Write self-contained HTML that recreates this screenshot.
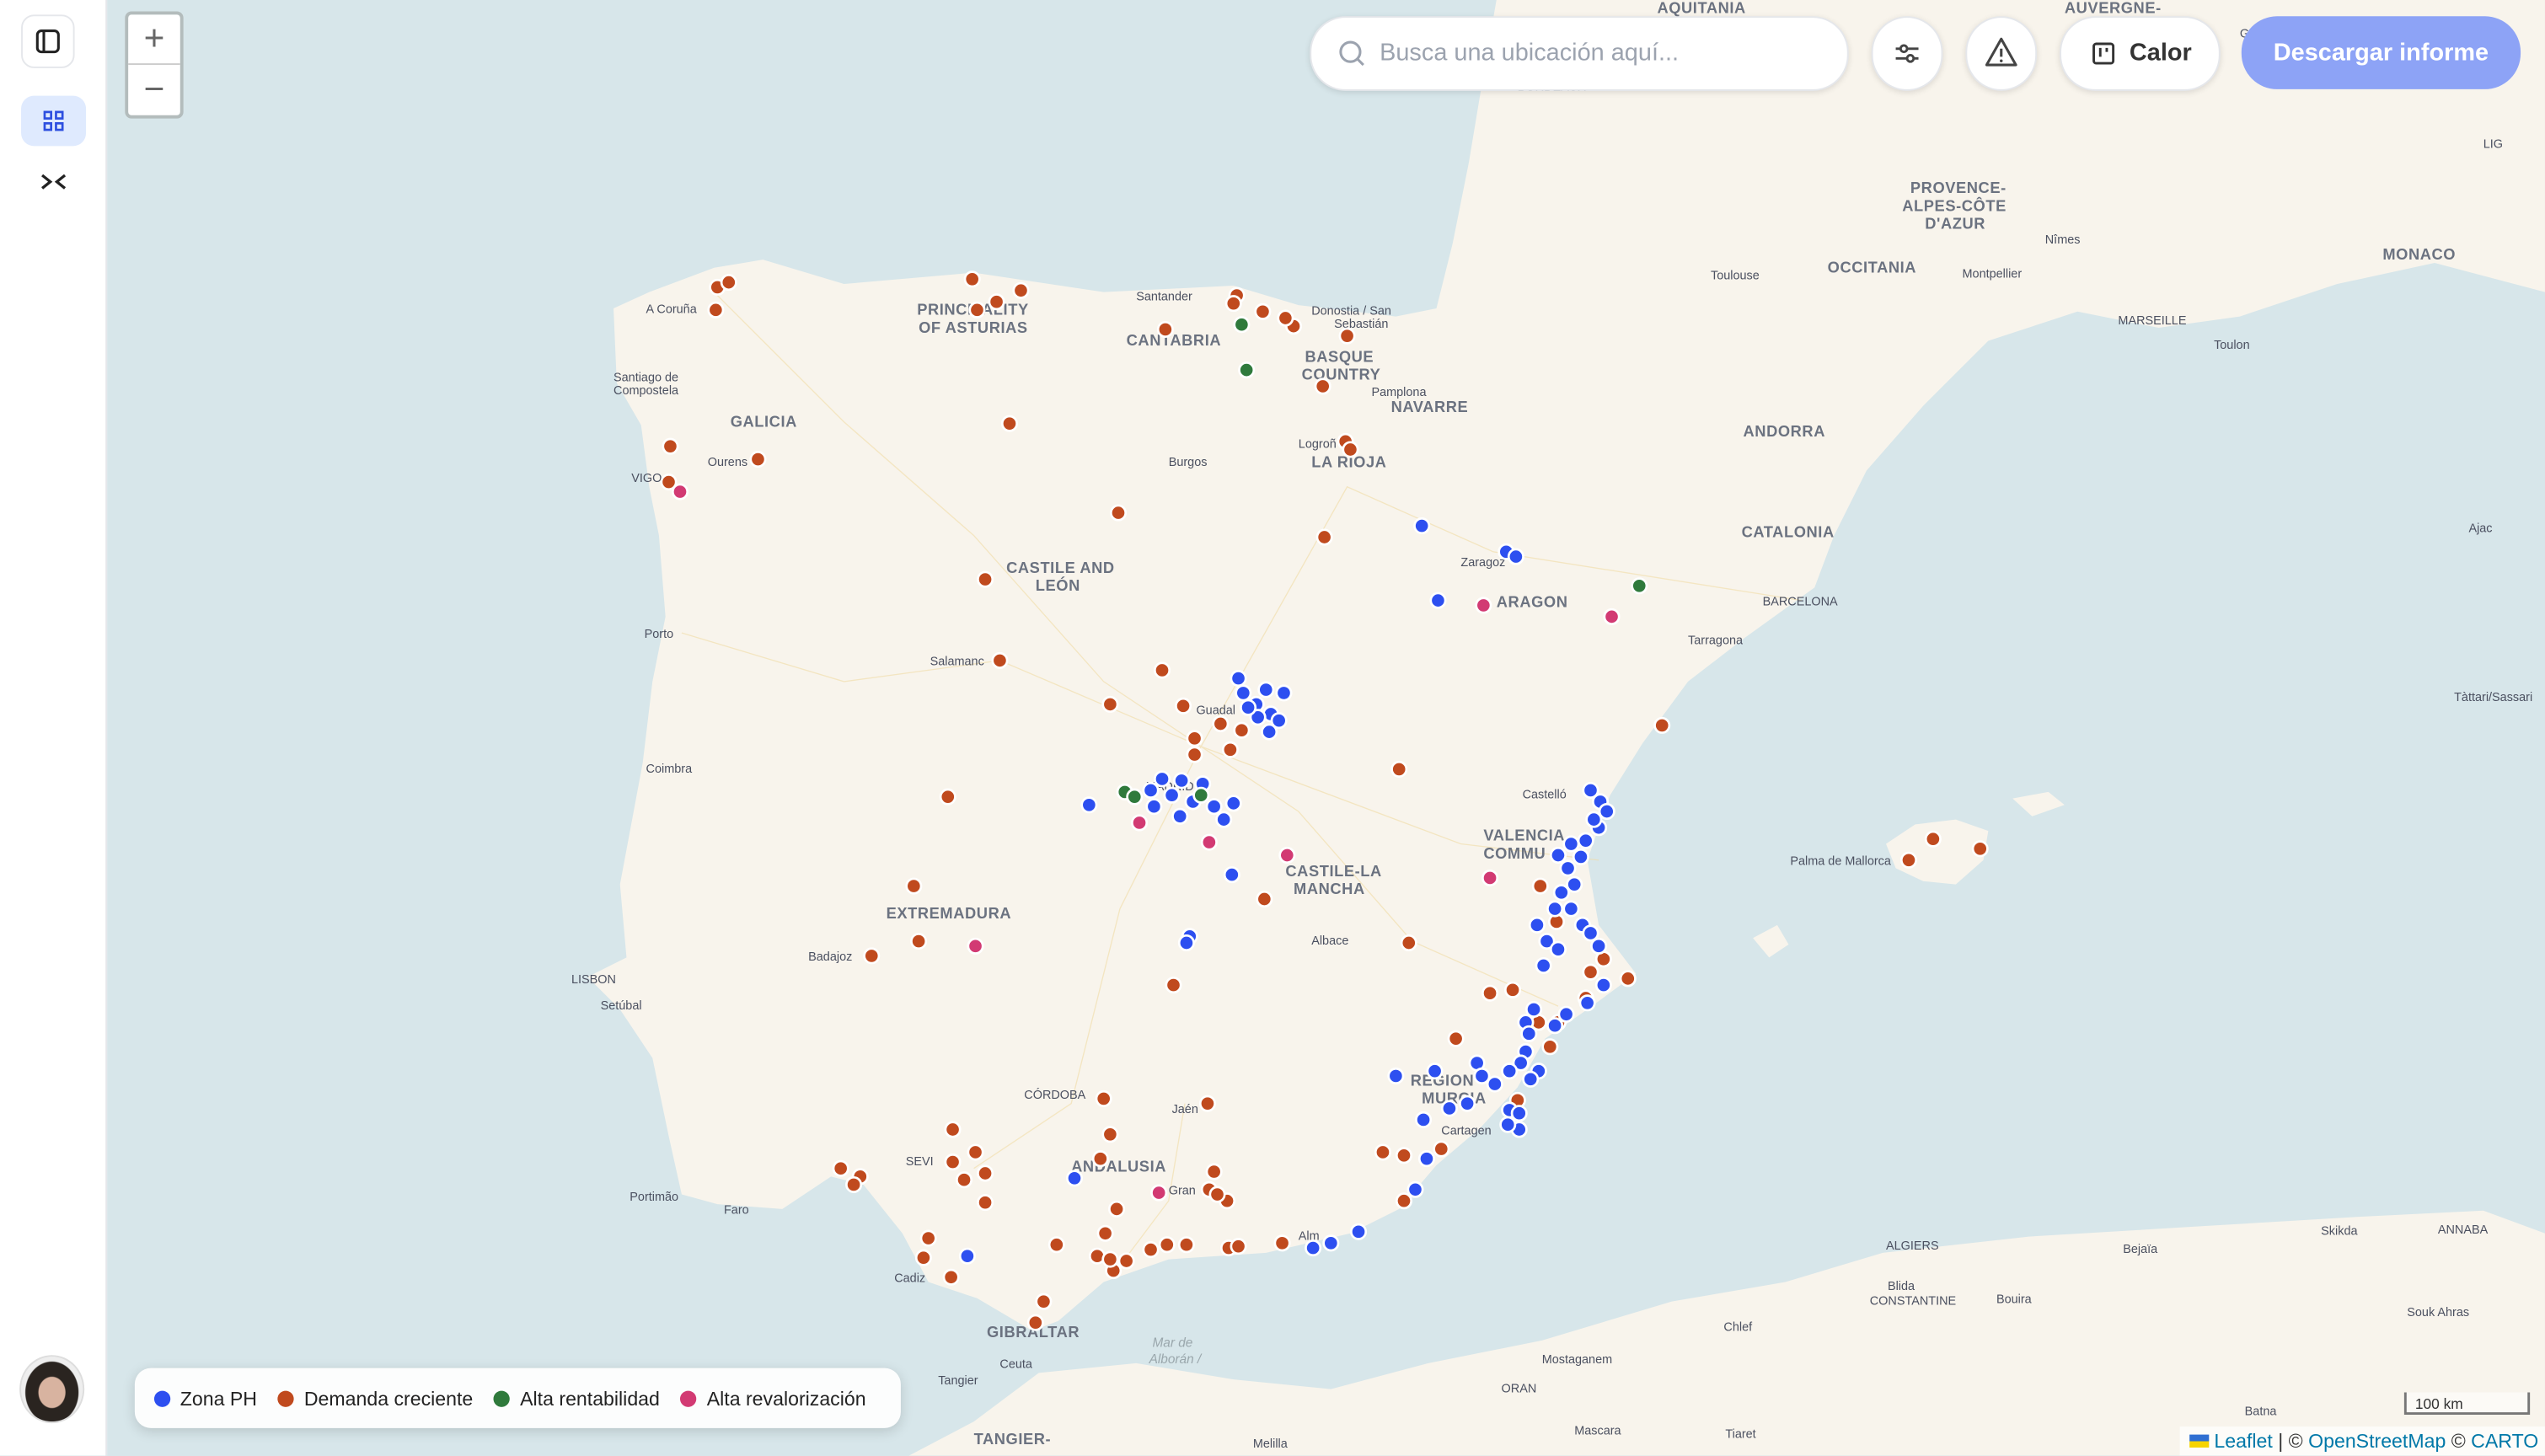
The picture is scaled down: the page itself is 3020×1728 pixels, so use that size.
<!DOCTYPE html>
<html><head><meta charset="utf-8">
<style>
html,body{margin:0;padding:0;width:3020px;height:1728px;overflow:hidden;background:#d7e6ea;font-family:"Liberation Sans",sans-serif}
#w{position:absolute;left:0;top:0;width:1568px;height:897px;transform:scale(1.9260);transform-origin:0 0;overflow:hidden}
#side{position:absolute;left:0;top:0;width:65px;height:897px;background:#fff;border-right:1px solid #e5e7eb}
.sb{position:absolute;left:13px;width:31px;height:31px;border:1px solid #e5e7eb;border-radius:8px;top:9px;background:#fff}
.grid{position:absolute;left:13px;top:59px;width:40px;height:31px;border-radius:8px;background:#dfeafe}
svg text{font-family:"Liberation Sans",sans-serif}
.z{position:absolute;left:77px;top:7px;width:32px;height:62px;border:2px solid #b3bcbc;border-radius:4px;background:#fff}
.pill{position:absolute;top:10px;height:44px;background:#fff;border:1px solid #e5e7eb;border-radius:22px;box-shadow:0 1px 4px rgba(0,0,0,.12)}
.lg{position:absolute;left:83px;top:843px;width:472px;height:37px;background:#fcfdfd;border-radius:10px;box-shadow:0 2px 8px rgba(0,0,0,.15);font-size:12px;color:#222;display:flex;align-items:center;padding-left:12px;box-sizing:border-box;white-space:nowrap}
.lg span.d{display:inline-block;width:10px;height:10px;border-radius:50%;margin-right:6px;flex:none}
.lg span.t{margin-right:13px;flex:none}
.o{fill:#c04a1e;stroke:#fff;stroke-width:1.4}
.b{fill:#2d4ff0;stroke:#fff;stroke-width:1.4}
.g{fill:#2f7a3c;stroke:#fff;stroke-width:1.4}
.p{fill:#d23a73;stroke:#fff;stroke-width:1.4}
.lab{fill:#6b7280;font-size:9.5px;font-weight:bold;letter-spacing:.3px}
.c{fill:#4b5060;font-size:7.5px}
</style></head><body><div id="w">
<svg width="1568" height="897" style="position:absolute;left:0;top:0">
<rect width="1568" height="897" fill="#d7e6ea"/>
<path fill="#f8f4ec" d="M378,190 L400,180 L440,165 L470,160 L520,175 L600,168 L680,180 L760,176 L800,188 L860,195 L885,190 L895,150 L905,100 L915,40 L922,0 L1568,0 L1568,180 L1500,162 L1440,175 L1380,195 L1330,202 L1280,192 L1225,210 L1185,250 L1150,290 L1130,330 L1118,362 L1075,393 L1040,420 L1012,458 L992,490 L978,530 L985,570 L1008,600 L978,622 L952,640 L935,670 L912,695 L885,718 L862,745 L832,760 L780,772 L720,776 L680,790 L652,814 L636,820 L602,800 L572,790 L556,760 L532,730 L512,725 L482,745 L442,742 L420,736 L412,700 L402,652 L382,622 L362,602 L386,590 L382,545 L396,470 L402,420 L410,380 L406,330 L400,300 L395,262 L380,236 Z"/>
<path fill="#f8f4ec" d="M560,897 L600,876 L640,846 L700,840 L760,850 L820,856 L880,840 L950,826 L1030,802 L1100,790 L1160,772 L1250,762 L1350,756 L1450,750 L1530,746 L1568,760 L1568,897 Z"/>
<path fill="#f8f4ec" d="M1162,520 L1180,508 L1205,505 L1225,512 L1222,530 L1205,545 L1185,543 L1168,535 Z"/>
<path fill="#f8f4ec" d="M1240,492 L1262,488 L1272,496 L1252,503 Z"/>
<path fill="#f8f4ec" d="M1080,578 L1095,570 L1102,582 L1090,590 Z"/>
<g fill="none" stroke="#f1dca6" stroke-width=".7" opacity=".6">
<path d="M440,180 L520,260 L600,330 L680,420 L740,460 L800,500 L870,580 L960,620"/><path d="M740,460 L830,300 L920,340 L1110,370"/><path d="M740,460 L690,560 L660,680 L600,720"/><path d="M740,460 L900,520 L985,530"/><path d="M420,390 L520,420 L616,407 L740,460"/><path d="M730,680 L720,740 L690,780"/>
</g>
<g class="lab">
<text x="565" y="194">PRINCIPALITY</text><text x="566" y="205">OF ASTURIAS</text><text x="694" y="213">CANTABRIA</text><text x="804" y="223">BASQUE</text><text x="802" y="234">COUNTRY</text><text x="857" y="254">NAVARRE</text><text x="808" y="288">LA RIOJA</text><text x="450" y="263">GALICIA</text><text x="620" y="353">CASTILE AND</text><text x="638" y="364">LEÓN</text><text x="922" y="374">ARAGON</text><text x="1073" y="331">CATALONIA</text><text x="1074" y="269">ANDORRA</text><text x="1126" y="168">OCCITANIA</text><text x="792" y="540">CASTILE-LA</text><text x="797" y="551">MANCHA</text><text x="546" y="566">EXTREMADURA</text><text x="660" y="722">ANDALUSIA</text><text x="914" y="518">VALENCIA</text><text x="914" y="529">COMMU</text><text x="869" y="669">REGION</text><text x="876" y="680">MURCIA</text><text x="1177" y="119">PROVENCE-</text><text x="1172" y="130">ALPES-CÔTE</text><text x="1186" y="141">D'AZUR</text><text x="1468" y="160">MONACO</text><text x="1272" y="8">AUVERGNE-</text><text x="1021" y="8">AQUITANIA</text><text x="608" y="824">GIBRALTAR</text><text x="600" y="890">TANGIER-</text>
</g>
<g class="c">
<text x="398" y="193">A Coruña</text><text x="378" y="235">Santiago de</text><text x="378" y="243">Compostela</text><text x="436" y="287">Ourens</text><text x="389" y="297">VIGO</text><text x="397" y="393">Porto</text><text x="398" y="476">Coimbra</text><text x="352" y="606">LISBON</text><text x="370" y="622">Setúbal</text><text x="388" y="740">Portimão</text><text x="446" y="748">Faro</text><text x="498" y="592">Badajoz</text><text x="573" y="410">Salamanc</text><text x="720" y="287">Burgos</text><text x="700" y="185">Santander</text><text x="808" y="194">Donostia / San</text><text x="822" y="202">Sebastián</text><text x="845" y="244">Pamplona</text><text x="800" y="276">Logroñ</text><text x="900" y="349">Zaragoz</text><text x="1040" y="397">Tarragona</text><text x="1086" y="373">BARCELONA</text><text x="1054" y="172">Toulouse</text><text x="1209" y="171">Montpellier</text><text x="1260" y="150">Nîmes</text><text x="1305" y="200">MARSEILLE</text><text x="1364" y="215">Toulon</text><text x="1103" y="533">Palma de Mallorca</text><text x="938" y="492">Castelló</text><text x="706" y="487">MADRID</text><text x="737" y="440">Guadal</text><text x="808" y="582">Albace</text><text x="631" y="677">CÓRDOBA</text><text x="722" y="686">Jaén</text><text x="558" y="718">SEVI</text><text x="720" y="736">Gran</text><text x="888" y="699">Cartagen</text><text x="800" y="764">Alm</text><text x="551" y="790">Cadiz</text><text x="616" y="843">Ceuta</text><text x="578" y="853">Tangier</text><text x="1162" y="770">ALGIERS</text><text x="1308" y="772">Bejaïa</text><text x="1163" y="795">Blida</text><text x="1230" y="803">Bouira</text><text x="1152" y="804">CONSTANTINE</text><text x="1062" y="820">Chlef</text><text x="950" y="840">Mostaganem</text><text x="925" y="858">ORAN</text><text x="1063" y="886">Tiaret</text><text x="970" y="884">Mascara</text><text x="1502" y="760">ANNABA</text><text x="1430" y="761">Skikda</text><text x="1483" y="811">Souk Ahras</text><text x="1383" y="872">Batna</text><text x="1521" y="328">Ajac</text><text x="1512" y="432">Tàttari/Sassari</text><text x="772" y="892">Melilla</text><text x="1380" y="23">Grenoble</text><text x="935" y="56">BORDEAUX</text><text x="1530" y="91">LIG</text>
</g>
<text x="710" y="830" fill="#9aa7ac" font-size="8" font-style="italic">Mar de</text><text x="708" y="840" fill="#9aa7ac" font-size="8" font-style="italic">Alborán /</text>
<g>
<circle class="o" cx="442" cy="177" r="4.5"/><circle class="o" cx="449" cy="174" r="4.5"/><circle class="o" cx="441" cy="191" r="4.5"/><circle class="o" cx="599" cy="172" r="4.5"/><circle class="o" cx="614" cy="186" r="4.5"/><circle class="o" cx="629" cy="179" r="4.5"/><circle class="o" cx="602" cy="191" r="4.5"/><circle class="o" cx="718" cy="203" r="4.5"/><circle class="o" cx="762" cy="182" r="4.5"/><circle class="o" cx="760" cy="187" r="4.5"/><circle class="o" cx="778" cy="192" r="4.5"/><circle class="o" cx="797" cy="201" r="4.5"/><circle class="o" cx="792" cy="196" r="4.5"/><circle class="o" cx="830" cy="207" r="4.5"/><circle class="o" cx="815" cy="238" r="4.5"/><circle class="o" cx="413" cy="275" r="4.5"/><circle class="o" cx="467" cy="283" r="4.5"/><circle class="o" cx="622" cy="261" r="4.5"/><circle class="o" cx="412" cy="297" r="4.5"/><circle class="o" cx="689" cy="316" r="4.5"/><circle class="o" cx="829" cy="272" r="4.5"/><circle class="o" cx="832" cy="277" r="4.5"/><circle class="o" cx="816" cy="331" r="4.5"/><circle class="o" cx="607" cy="357" r="4.5"/><circle class="o" cx="616" cy="407" r="4.5"/><circle class="o" cx="716" cy="413" r="4.5"/><circle class="o" cx="684" cy="434" r="4.5"/><circle class="o" cx="729" cy="435" r="4.5"/><circle class="o" cx="752" cy="446" r="4.5"/><circle class="o" cx="765" cy="450" r="4.5"/><circle class="o" cx="736" cy="455" r="4.5"/><circle class="o" cx="758" cy="462" r="4.5"/><circle class="o" cx="736" cy="465" r="4.5"/><circle class="o" cx="862" cy="474" r="4.5"/><circle class="o" cx="584" cy="491" r="4.5"/><circle class="o" cx="563" cy="546" r="4.5"/><circle class="o" cx="566" cy="580" r="4.5"/><circle class="o" cx="537" cy="589" r="4.5"/><circle class="o" cx="779" cy="554" r="4.5"/><circle class="o" cx="868" cy="581" r="4.5"/><circle class="o" cx="723" cy="607" r="4.5"/><circle class="o" cx="918" cy="612" r="4.5"/><circle class="o" cx="932" cy="610" r="4.5"/><circle class="o" cx="1024" cy="447" r="4.5"/><circle class="o" cx="949" cy="546" r="4.5"/><circle class="o" cx="959" cy="568" r="4.5"/><circle class="o" cx="1003" cy="603" r="4.5"/><circle class="o" cx="988" cy="591" r="4.5"/><circle class="o" cx="897" cy="640" r="4.5"/><circle class="o" cx="680" cy="677" r="4.5"/><circle class="o" cx="744" cy="680" r="4.5"/><circle class="o" cx="587" cy="696" r="4.5"/><circle class="o" cx="684" cy="699" r="4.5"/><circle class="o" cx="601" cy="710" r="4.5"/><circle class="o" cx="587" cy="716" r="4.5"/><circle class="o" cx="594" cy="727" r="4.5"/><circle class="o" cx="607" cy="723" r="4.5"/><circle class="o" cx="607" cy="741" r="4.5"/><circle class="o" cx="518" cy="720" r="4.5"/><circle class="o" cx="530" cy="725" r="4.5"/><circle class="o" cx="526" cy="730" r="4.5"/><circle class="o" cx="678" cy="714" r="4.5"/><circle class="o" cx="748" cy="722" r="4.5"/><circle class="o" cx="745" cy="733" r="4.5"/><circle class="o" cx="756" cy="740" r="4.5"/><circle class="o" cx="750" cy="736" r="4.5"/><circle class="o" cx="688" cy="745" r="4.5"/><circle class="o" cx="681" cy="760" r="4.5"/><circle class="o" cx="651" cy="767" r="4.5"/><circle class="o" cx="676" cy="774" r="4.5"/><circle class="o" cx="686" cy="783" r="4.5"/><circle class="o" cx="694" cy="777" r="4.5"/><circle class="o" cx="684" cy="776" r="4.5"/><circle class="o" cx="709" cy="770" r="4.5"/><circle class="o" cx="719" cy="767" r="4.5"/><circle class="o" cx="731" cy="767" r="4.5"/><circle class="o" cx="757" cy="769" r="4.5"/><circle class="o" cx="763" cy="768" r="4.5"/><circle class="o" cx="790" cy="766" r="4.5"/><circle class="o" cx="572" cy="763" r="4.5"/><circle class="o" cx="569" cy="775" r="4.5"/><circle class="o" cx="586" cy="787" r="4.5"/><circle class="o" cx="643" cy="802" r="4.5"/><circle class="o" cx="638" cy="815" r="4.5"/><circle class="o" cx="852" cy="710" r="4.5"/><circle class="o" cx="865" cy="712" r="4.5"/><circle class="o" cx="888" cy="708" r="4.5"/><circle class="o" cx="865" cy="740" r="4.5"/><circle class="o" cx="1191" cy="517" r="4.5"/><circle class="o" cx="1220" cy="523" r="4.5"/><circle class="o" cx="1176" cy="530" r="4.5"/><circle class="o" cx="960" cy="630" r="4.5"/><circle class="o" cx="977" cy="615" r="4.5"/><circle class="o" cx="948" cy="630" r="4.5"/><circle class="o" cx="955" cy="645" r="4.5"/><circle class="o" cx="935" cy="678" r="4.5"/><circle class="o" cx="980" cy="599" r="4.5"/>
</g>
<g>
<circle class="b" cx="876" cy="324" r="4.5"/><circle class="b" cx="928" cy="340" r="4.5"/><circle class="b" cx="934" cy="343" r="4.5"/><circle class="b" cx="886" cy="370" r="4.5"/><circle class="b" cx="763" cy="418" r="4.5"/><circle class="b" cx="766" cy="427" r="4.5"/><circle class="b" cx="780" cy="425" r="4.5"/><circle class="b" cx="791" cy="427" r="4.5"/><circle class="b" cx="774" cy="434" r="4.5"/><circle class="b" cx="783" cy="440" r="4.5"/><circle class="b" cx="788" cy="444" r="4.5"/><circle class="b" cx="775" cy="442" r="4.5"/><circle class="b" cx="782" cy="451" r="4.5"/><circle class="b" cx="769" cy="436" r="4.5"/><circle class="b" cx="716" cy="480" r="4.5"/><circle class="b" cx="709" cy="487" r="4.5"/><circle class="b" cx="722" cy="490" r="4.5"/><circle class="b" cx="728" cy="481" r="4.5"/><circle class="b" cx="741" cy="483" r="4.5"/><circle class="b" cx="735" cy="494" r="4.5"/><circle class="b" cx="748" cy="497" r="4.5"/><circle class="b" cx="760" cy="495" r="4.5"/><circle class="b" cx="754" cy="505" r="4.5"/><circle class="b" cx="711" cy="497" r="4.5"/><circle class="b" cx="727" cy="503" r="4.5"/><circle class="b" cx="671" cy="496" r="4.5"/><circle class="b" cx="759" cy="539" r="4.5"/><circle class="b" cx="733" cy="577" r="4.5"/><circle class="b" cx="731" cy="581" r="4.5"/>
<circle class="b" cx="980" cy="487" r="4.5"/><circle class="b" cx="986" cy="494" r="4.5"/><circle class="b" cx="990" cy="500" r="4.5"/><circle class="b" cx="985" cy="510" r="4.5"/><circle class="b" cx="977" cy="518" r="4.5"/><circle class="b" cx="982" cy="505" r="4.5"/><circle class="b" cx="968" cy="520" r="4.5"/><circle class="b" cx="960" cy="527" r="4.5"/><circle class="b" cx="966" cy="535" r="4.5"/><circle class="b" cx="974" cy="528" r="4.5"/><circle class="b" cx="970" cy="545" r="4.5"/><circle class="b" cx="962" cy="550" r="4.5"/><circle class="b" cx="968" cy="560" r="4.5"/><circle class="b" cx="975" cy="570" r="4.5"/><circle class="b" cx="958" cy="560" r="4.5"/><circle class="b" cx="947" cy="570" r="4.5"/><circle class="b" cx="953" cy="580" r="4.5"/><circle class="b" cx="960" cy="585" r="4.5"/><circle class="b" cx="951" cy="595" r="4.5"/><circle class="b" cx="980" cy="575" r="4.5"/><circle class="b" cx="985" cy="583" r="4.5"/><circle class="b" cx="988" cy="607" r="4.5"/><circle class="b" cx="978" cy="618" r="4.5"/><circle class="b" cx="965" cy="625" r="4.5"/><circle class="b" cx="958" cy="632" r="4.5"/><circle class="b" cx="945" cy="622" r="4.5"/><circle class="b" cx="940" cy="630" r="4.5"/><circle class="b" cx="942" cy="637" r="4.5"/><circle class="b" cx="940" cy="648" r="4.5"/><circle class="b" cx="937" cy="655" r="4.5"/><circle class="b" cx="948" cy="660" r="4.5"/><circle class="b" cx="943" cy="665" r="4.5"/><circle class="b" cx="930" cy="660" r="4.5"/><circle class="b" cx="921" cy="668" r="4.5"/><circle class="b" cx="910" cy="655" r="4.5"/><circle class="b" cx="913" cy="663" r="4.5"/><circle class="b" cx="884" cy="660" r="4.5"/><circle class="b" cx="860" cy="663" r="4.5"/><circle class="b" cx="904" cy="680" r="4.5"/><circle class="b" cx="893" cy="683" r="4.5"/><circle class="b" cx="877" cy="690" r="4.5"/><circle class="b" cx="930" cy="684" r="4.5"/><circle class="b" cx="936" cy="686" r="4.5"/><circle class="b" cx="936" cy="696" r="4.5"/><circle class="b" cx="929" cy="693" r="4.5"/><circle class="b" cx="879" cy="714" r="4.5"/><circle class="b" cx="872" cy="733" r="4.5"/><circle class="b" cx="837" cy="759" r="4.5"/><circle class="b" cx="820" cy="766" r="4.5"/><circle class="b" cx="809" cy="769" r="4.5"/><circle class="b" cx="596" cy="774" r="4.5"/><circle class="b" cx="662" cy="726" r="4.5"/>
</g>
<g><circle class="g" cx="765" cy="200" r="4.5"/><circle class="g" cx="768" cy="228" r="4.5"/><circle class="g" cx="1010" cy="361" r="4.5"/><circle class="g" cx="693" cy="488" r="4.5"/><circle class="g" cx="699" cy="491" r="4.5"/><circle class="g" cx="740" cy="490" r="4.5"/></g>
<g><circle class="p" cx="419" cy="303" r="4.5"/><circle class="p" cx="914" cy="373" r="4.5"/><circle class="p" cx="993" cy="380" r="4.5"/><circle class="p" cx="745" cy="519" r="4.5"/><circle class="p" cx="793" cy="527" r="4.5"/><circle class="p" cx="918" cy="541" r="4.5"/><circle class="p" cx="601" cy="583" r="4.5"/><circle class="p" cx="714" cy="735" r="4.5"/><circle class="p" cx="702" cy="507" r="4.5"/></g>
<path d="M1482,858 L1482,871 L1558,871 L1558,858" fill="rgba(255,255,255,.5)" stroke="#777" stroke-width="1.5"/>
<text x="1488" y="868" font-size="9" fill="#333">100 km</text>
</svg>
<div style="position:absolute;right:0;bottom:0;height:18px;padding:0 4px 0 6px;background:rgba(255,255,255,.7);font-size:12px;line-height:18px;color:#333">
<span style="display:inline-block;width:12px;height:8px;background:linear-gradient(#2f6fd1 50%,#f6d400 50%)"></span> <span style="color:#0078a8">Leaflet</span> | © <span style="color:#0078a8">OpenStreetMap</span> © <span style="color:#0078a8">CARTO</span></div>

<div id="side">
<div class="sb"><svg width="31" height="31" viewBox="0 0 31 31"><rect x="9" y="9" width="13" height="13" rx="2.5" fill="none" stroke="#222" stroke-width="1.6"/><line x1="13" y1="9" x2="13" y2="22" stroke="#222" stroke-width="1.6"/></svg></div>
<div class="grid"><svg width="40" height="31" viewBox="0 0 40 31"><g fill="none" stroke="#2d4fe0" stroke-width="1.4"><rect x="14.5" y="10" width="4" height="4"/><rect x="21.5" y="10" width="4" height="4"/><rect x="14.5" y="17" width="4" height="4"/><rect x="21.5" y="17" width="4" height="4"/></g></svg></div>
<svg style="position:absolute;left:24px;top:106px" width="18" height="12" viewBox="0 0 18 12"><path d="M2,2 L7,6 L2,10 M16,2 L11,6 L16,10" fill="none" stroke="#222" stroke-width="1.7"/></svg>
<div style="position:absolute;left:12px;top:835px;width:38px;height:40px;border-radius:50%;background:radial-gradient(ellipse at 50% 55%,#d8b3a0 0 30%,#2a2420 32% 60%,#eee 62%);border:1px solid #ddd"></div>
</div>

<div class="z"><div style="height:30px;border-bottom:1px solid #ccc;text-align:center;font-size:22px;line-height:30px;color:#666">+</div><div style="text-align:center;font-size:22px;line-height:30px;color:#666">−</div></div>

<div class="pill" style="left:807px;width:330px"><svg style="position:absolute;left:16px;top:13px" width="18" height="18" viewBox="0 0 18 18"><circle cx="8" cy="8" r="6" fill="none" stroke="#9ca3af" stroke-width="1.6"/><line x1="12.5" y1="12.5" x2="16" y2="16" stroke="#9ca3af" stroke-width="1.6"/></svg><span style="position:absolute;left:42px;top:13px;font-size:15px;color:#9ca3af">Busca una ubicación aquí...</span></div>
<div class="pill" style="left:1153px;width:42px"><svg style="position:absolute;left:11px;top:12px" width="20" height="20" viewBox="0 0 20 20"><g fill="none" stroke="#444" stroke-width="1.5"><line x1="3" y1="7" x2="17" y2="7"/><line x1="3" y1="13" x2="17" y2="13"/><circle cx="8" cy="7" r="2" fill="#fff"/><circle cx="12" cy="13" r="2" fill="#fff"/></g></svg></div>
<div class="pill" style="left:1211px;width:42px"><svg style="position:absolute;left:10px;top:11px" width="22" height="20" viewBox="0 0 22 20"><path d="M11,2 L20,18 L2,18 Z" fill="none" stroke="#444" stroke-width="1.6" stroke-linejoin="round"/><line x1="11" y1="8" x2="11" y2="13" stroke="#444" stroke-width="1.6"/><circle cx="11" cy="15.5" r=".9" fill="#444"/></svg></div>
<div class="pill" style="left:1269px;width:97px"><svg style="position:absolute;left:18px;top:14px" width="16" height="16" viewBox="0 0 16 16"><rect x="2" y="2" width="12" height="12" rx="1.5" fill="none" stroke="#333" stroke-width="1.5"/><line x1="6" y1="4.5" x2="6" y2="10" stroke="#333" stroke-width="1.5"/><line x1="10" y1="4.5" x2="10" y2="7" stroke="#333" stroke-width="1.5"/></svg><span style="position:absolute;left:42px;top:13px;font-size:15px;font-weight:bold;color:#333">Calor</span></div>
<div style="position:absolute;left:1381px;top:10px;width:172px;height:45px;border-radius:22px;background:#8da3f6;color:#fff;font-size:15px;font-weight:bold;line-height:45px;text-align:center">Descargar informe</div>

<div class="lg"><span class="d" style="background:#2d4ff0"></span><span class="t">Zona PH</span><span class="d" style="background:#c04a1e"></span><span class="t">Demanda creciente</span><span class="d" style="background:#2f7a3c"></span><span class="t">Alta rentabilidad</span><span class="d" style="background:#d23a73"></span><span class="t">Alta revalorización</span></div>
</div></body></html>
